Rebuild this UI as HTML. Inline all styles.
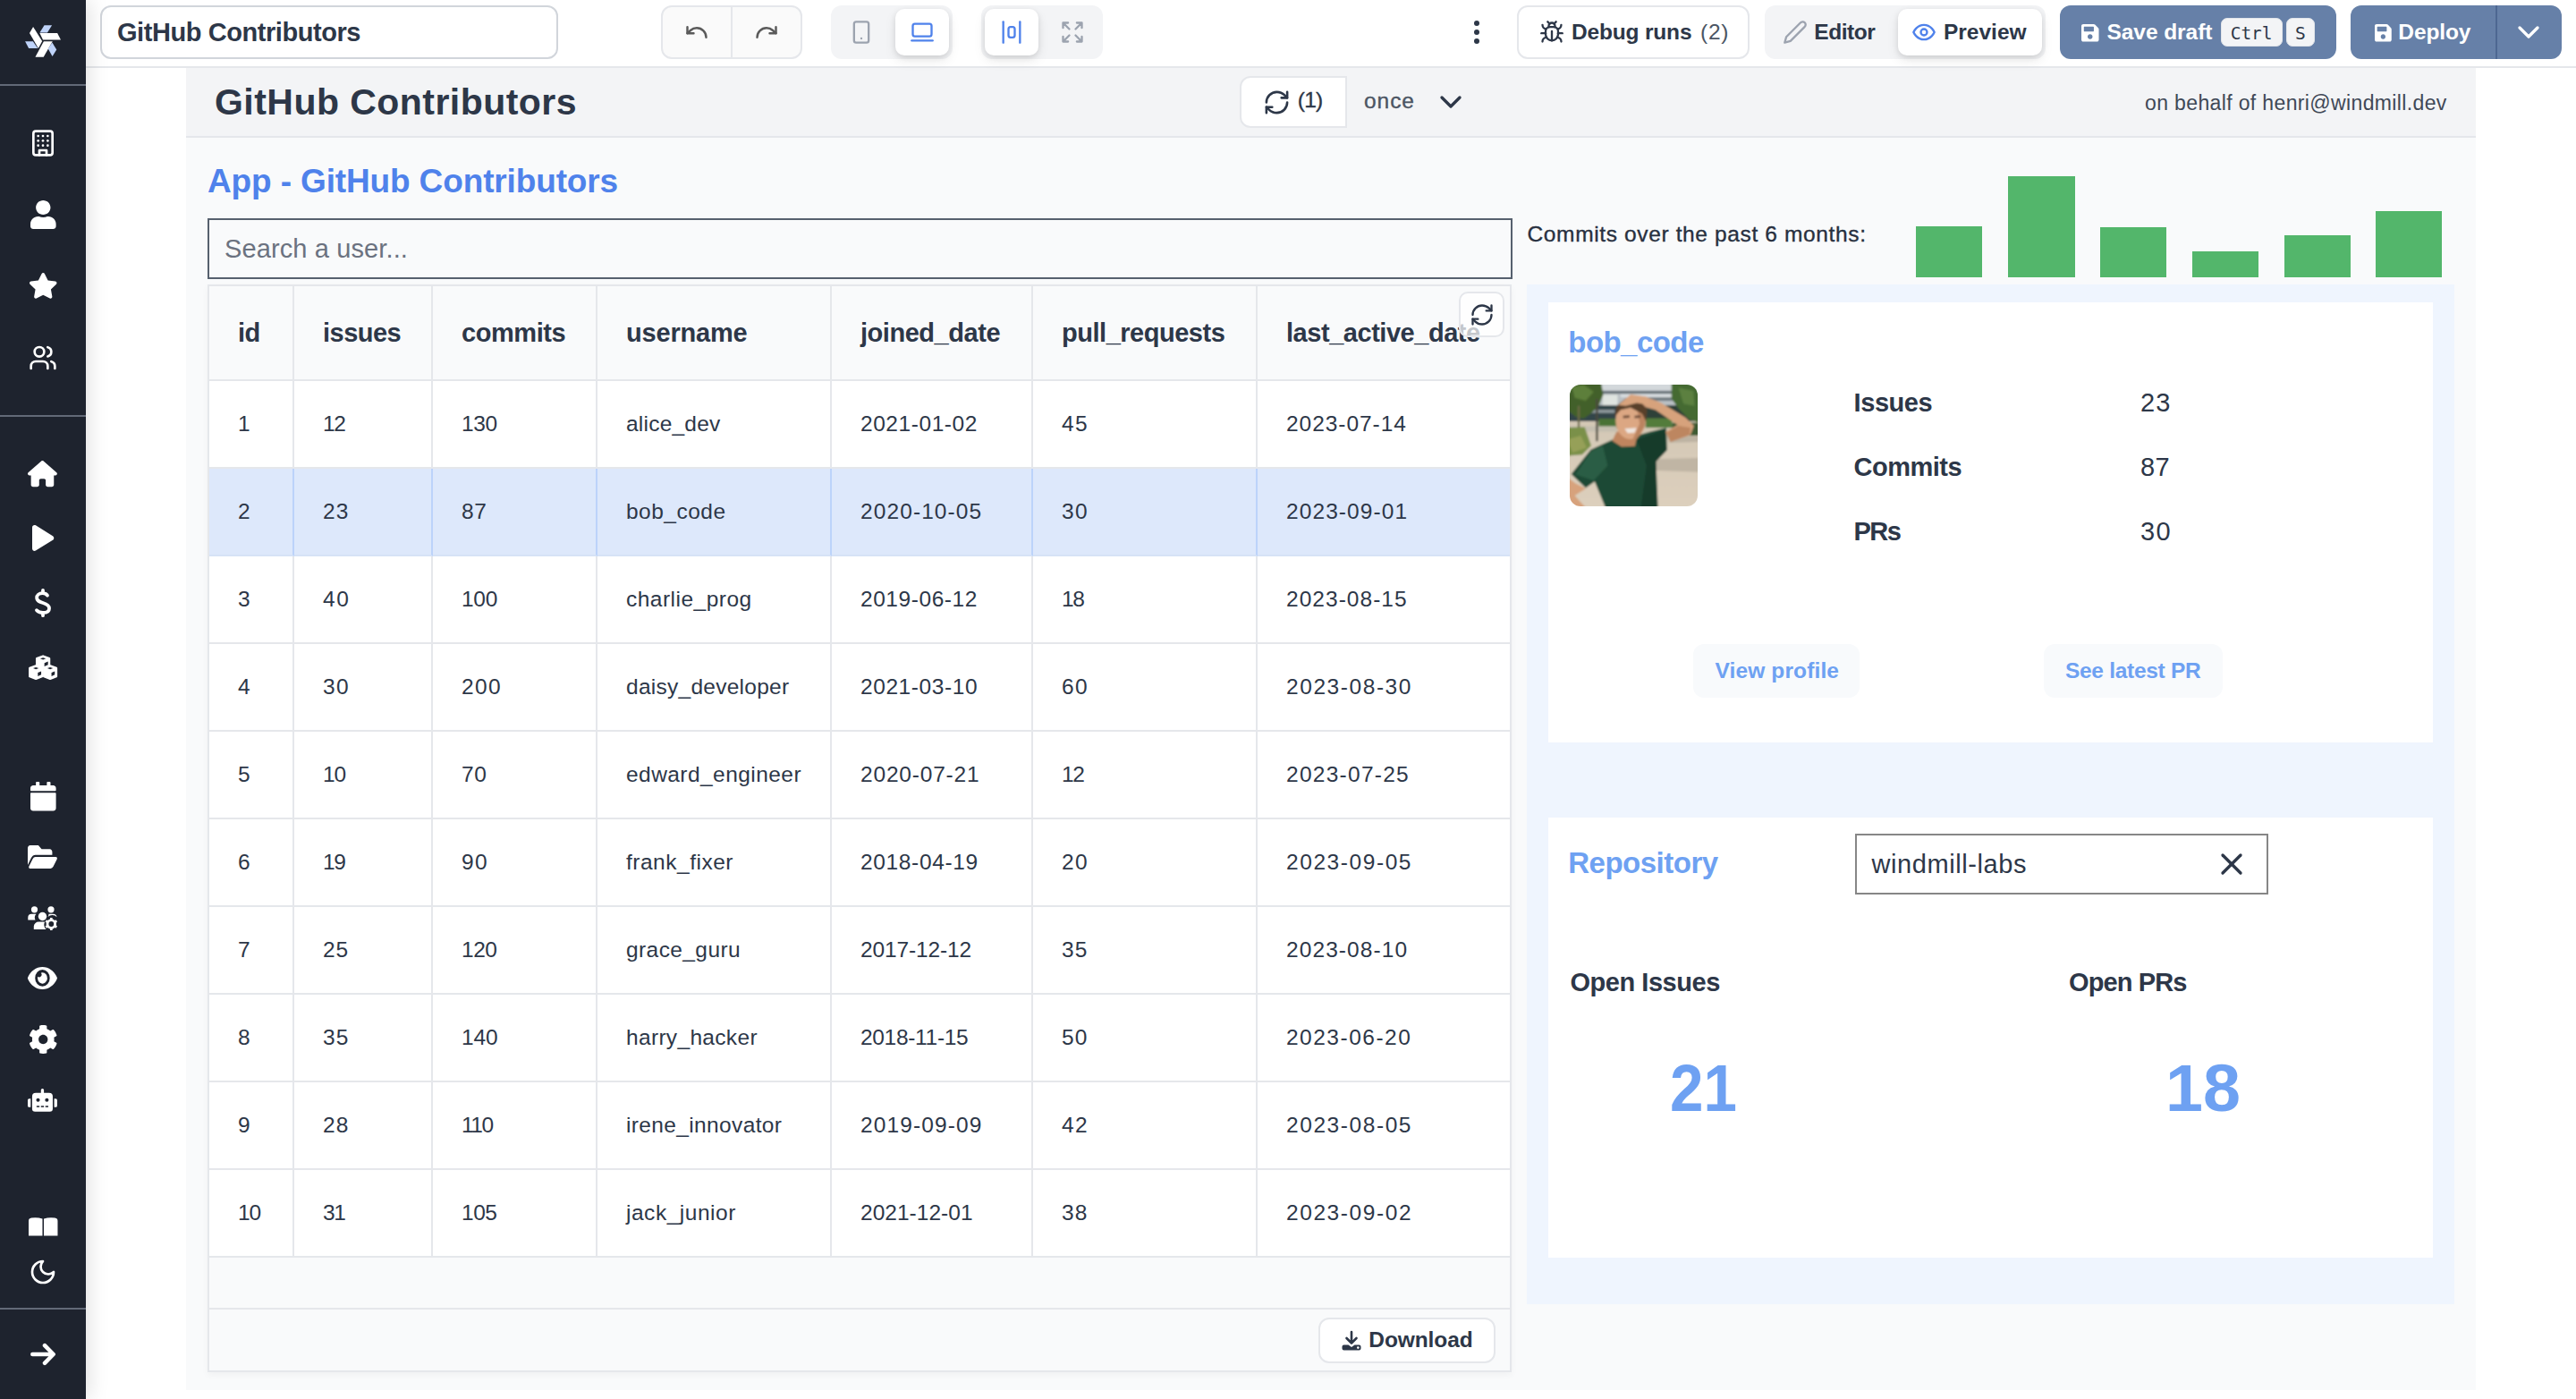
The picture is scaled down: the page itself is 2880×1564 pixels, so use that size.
<!DOCTYPE html><html lang="en"><head><meta charset="utf-8"><title>GitHub Contributors</title><style>
*{box-sizing:border-box;margin:0;padding:0}
html,body{width:2880px;height:1564px;overflow:hidden;background:#fff}
body{position:relative;font-family:"Liberation Sans",sans-serif;color:#2d3748}
.abs,.t,.ic{position:absolute}
.t{white-space:nowrap;line-height:1}
.ic{display:block;overflow:visible}
#sidebar{left:0;top:0;width:96px;height:1564px;background:#1e232e;box-shadow:3px 0 22px rgba(0,0,0,.13);z-index:5}
.sdiv{left:0;width:96px;height:2px;background:#626977}
#topbar{left:96px;top:0;width:2784px;height:76px;background:#fff;border-bottom:2px solid #e5e7eb;z-index:3}
.box{border:2px solid #e5e7eb;border-radius:12px;background:#fff}
.tog{background:#f3f4f6;border-radius:12px}
.sel{background:#fff;border-radius:10px;box-shadow:0 2px 6px rgba(0,0,0,.10),0 6px 14px rgba(0,0,0,.08)}
#canvas{left:208px;top:75px;width:2560px;height:1479px;background:#f9fafb}
#apphdr{left:0;top:0;width:2560px;height:79px;background:#f3f4f6;border-bottom:2px solid #e5e7eb}
table{border-collapse:separate;border-spacing:0;table-layout:fixed;position:absolute;left:0;top:0}
th,td{border-right:2px solid #e5e7eb;border-bottom:2px solid #e5e7eb;text-align:left;padding:0 0 0 32px;white-space:nowrap;overflow:hidden;vertical-align:top}
th:last-child,td:last-child{border-right:none}
th{height:106px;background:#f9fafb;color:#2d3748}
td{height:98px;background:#fff;color:#2d3748}
tr.selrow td{background:#dde8fb;border-right-color:#bcd3fa;border-bottom-color:#d6e2f6}
th span,td span{display:block;line-height:1;position:relative}
kbd{position:absolute;background:#f3f4f6;border:1px solid #e2e5ea;border-radius:7px;color:#2d3748;font-family:"DejaVu Sans Mono","Liberation Mono",monospace;font-size:19.500px;line-height:1;text-align:center}
</style></head><body>
<div id="topbar" class="abs">
<div class="abs box" style="left:16px;top:6px;width:512px;height:60px;border-color:#d1d5db"></div>
<span class="t" style="left:35px;top:22.45px;font-size:29.0px;font-weight:700;letter-spacing:-0.437px;color:#2d3748;">GitHub Contributors</span>
<div class="abs box" style="left:643px;top:6px;width:158px;height:60px;background:#fafafa"></div>
<div class="abs" style="left:721px;top:8px;width:2px;height:56px;background:#e5e7eb"></div>
<svg class="ic" style="left:668.75px;top:22.00px;width:28px;height:28px;" viewBox="0 0 24 24" fill="none" stroke="#5a5a5a" stroke-width="2.1" stroke-linecap="round" stroke-linejoin="round"><path d="M3 7v6h6"/><path d="M21 17a9 9 0 0 0-9-9 9 9 0 0 0-6 2.3L3 13"/></svg>
<svg class="ic" style="left:747.00px;top:22.00px;width:28px;height:28px;" viewBox="0 0 24 24" fill="none" stroke="#5a5a5a" stroke-width="2.1" stroke-linecap="round" stroke-linejoin="round"><path d="M21 7v6h-6"/><path d="M3 17a9 9 0 0 1 9-9 9 9 0 0 1 6 2.3l3 2.7"/></svg>
<div class="abs tog" style="left:833px;top:6px;width:135.5px;height:60px"></div>
<div class="abs sel" style="left:905px;top:10px;width:60px;height:52px"></div>
<svg class="ic" style="left:852.75px;top:22.00px;width:28px;height:28px;" viewBox="0 0 24 24" fill="none" stroke="#9ca3af" stroke-width="2" stroke-linecap="round" stroke-linejoin="round"><rect width="14" height="20" x="5" y="2" rx="2" ry="2"/><path d="M12 18h.01"/></svg>
<svg class="ic" style="left:920.50px;top:22.00px;width:28px;height:28px;" viewBox="0 0 24 24" fill="none" stroke="#4f82eb" stroke-width="2" stroke-linecap="round" stroke-linejoin="round"><rect width="18" height="12" x="3" y="4" rx="2" ry="2"/><line x1="2" x2="22" y1="20" y2="20"/></svg>
<div class="abs tog" style="left:1001px;top:6px;width:135.5px;height:60px"></div>
<div class="abs sel" style="left:1004.5px;top:10px;width:60px;height:52px"></div>
<svg class="ic" style="left:1020.50px;top:22.00px;width:28px;height:28px;" viewBox="0 0 24 24" fill="none" stroke="#4f82eb" stroke-width="2" stroke-linecap="round" stroke-linejoin="round"><rect width="6" height="10" x="9" y="7" rx="2"/><path d="M4 22V2"/><path d="M20 22V2"/></svg>
<svg class="ic" style="left:1088.50px;top:22.00px;width:28px;height:28px;" viewBox="0 0 24 24" fill="none" stroke="#9ca3af" stroke-width="2" stroke-linecap="round" stroke-linejoin="round"><path d="m21 21-6-6m6 6v-4.8m0 4.8h-4.8"/><path d="M3 16.2V21m0 0h4.8M3 21l6-6"/><path d="M21 7.8V3m0 0h-4.8M21 3l-6 6"/><path d="M3 7.8V3m0 0h4.8M3 3l6 6"/></svg>
<div class="abs" style="left:1551.7px;top:22.9px;width:6.6px;height:6.6px;border-radius:50%;background:#2d3748"></div>
<div class="abs" style="left:1551.7px;top:32.7px;width:6.6px;height:6.6px;border-radius:50%;background:#2d3748"></div>
<div class="abs" style="left:1551.7px;top:42.5px;width:6.6px;height:6.6px;border-radius:50%;background:#2d3748"></div>
<div class="abs box" style="left:1599.5px;top:6px;width:260.5px;height:60px"></div>
<svg class="ic" style="left:1625.00px;top:22.00px;width:28px;height:28px;" viewBox="0 0 24 24" fill="none" stroke="#2d3748" stroke-width="2" stroke-linecap="round" stroke-linejoin="round"><path d="m8 2 1.88 1.88"/><path d="M14.12 3.88 16 2"/><path d="M9 7.13v-1a3.003 3.003 0 1 1 6 0v1"/><path d="M12 20c-3.3 0-6-2.7-6-6v-3a4 4 0 0 1 4-4h4a4 4 0 0 1 4 4v3c0 3.3-2.7 6-6 6"/><path d="M12 20v-9"/><path d="M6.53 9C4.6 8.8 3 7.1 3 5"/><path d="M6 13H2"/><path d="M3 21c0-2.1 1.7-3.9 3.8-4"/><path d="M20.97 5c0 2.1-1.6 3.8-3.5 4"/><path d="M22 13h-4"/><path d="M17.2 17c2.1.1 3.8 1.9 3.8 4"/></svg>
<span class="t" style="left:1661px;top:23.96px;font-size:24.5px;font-weight:700;letter-spacing:-0.177px;color:#2d3748;">Debug runs</span>
<span class="t" style="left:1805px;top:23.96px;font-size:24.5px;font-weight:400;letter-spacing:0.734px;color:#4b5563;">(2)</span>
<div class="abs tog" style="left:1876.5px;top:6px;width:314.5px;height:60px"></div>
<div class="abs sel" style="left:2025.75px;top:10px;width:161.25px;height:52px"></div>
<svg class="ic" style="left:1897.00px;top:22.00px;width:28px;height:28px;" viewBox="0 0 24 24" fill="none" stroke="#9ca3af" stroke-width="2" stroke-linecap="round" stroke-linejoin="round"><path d="M17 3a2.85 2.83 0 1 1 4 4L7.5 20.5 2 22l1.5-5.5Z"/></svg>
<span class="t" style="left:1932.3px;top:23.96px;font-size:24.5px;font-weight:700;letter-spacing:-0.434px;color:#2d3748;">Editor</span>
<svg class="ic" style="left:2041.25px;top:22.00px;width:28px;height:28px;" viewBox="0 0 24 24" fill="none" stroke="#4f82eb" stroke-width="2" stroke-linecap="round" stroke-linejoin="round"><path d="M2 12s3-7 10-7 10 7 10 7-3 7-10 7-10-7-10-7Z"/><circle cx="12" cy="12" r="3"/></svg>
<span class="t" style="left:2077px;top:23.96px;font-size:24.5px;font-weight:700;letter-spacing:-0.007px;color:#2d3748;">Preview</span>
<div class="abs" style="left:2207px;top:6px;width:308.5px;height:60px;border-radius:12px;background:#6680a8"></div>
<svg class="ic" style="left:2230.50px;top:27.00px;width:19.50px;height:19.50px" viewBox="0.00 32.00 448.00 448.00" preserveAspectRatio="none"><path fill="#fff" d="M433.941 129.941l-83.882-83.882A48 48 0 0 0 316.118 32H48C21.49 32 0 53.49 0 80v352c0 26.51 21.49 48 48 48h352c26.51 0 48-21.49 48-48V163.882a48 48 0 0 0-14.059-33.941zM224 416c-35.346 0-64-28.654-64-64 0-35.346 28.654-64 64-64s64 28.654 64 64c0 35.346-28.654 64-64 64zm96-304.52V212c0 6.627-5.373 12-12 12H76c-6.627 0-12-5.373-12-12V108c0-6.627 5.373-12 12-12h228.52c3.183 0 6.235 1.264 8.485 3.515l3.48 3.48A11.996 11.996 0 0 1 320 111.48z"/></svg>
<span class="t" style="left:2259.5px;top:23.96px;font-size:24.5px;font-weight:700;letter-spacing:-0.064px;color:#fff;">Save draft</span>
<kbd style="left:2386.75px;top:20px;width:68.75px;height:32px;padding-top:6.600px">Ctrl</kbd>
<kbd style="left:2460px;top:20px;width:31.500px;height:32px;padding-top:6.600px">S</kbd>
<div class="abs" style="left:2531.75px;top:6px;width:235.75px;height:60px;border-radius:12px;background:#6680a8"></div>
<div class="abs" style="left:2693.5px;top:6px;width:2px;height:60px;background:#4d6792"></div>
<svg class="ic" style="left:2558.75px;top:27.00px;width:18.75px;height:19.50px" viewBox="0.00 32.00 448.00 448.00" preserveAspectRatio="none"><path fill="#fff" d="M433.941 129.941l-83.882-83.882A48 48 0 0 0 316.118 32H48C21.49 32 0 53.49 0 80v352c0 26.51 21.49 48 48 48h352c26.51 0 48-21.49 48-48V163.882a48 48 0 0 0-14.059-33.941zM224 416c-35.346 0-64-28.654-64-64 0-35.346 28.654-64 64-64s64 28.654 64 64c0 35.346-28.654 64-64 64zm96-304.52V212c0 6.627-5.373 12-12 12H76c-6.627 0-12-5.373-12-12V108c0-6.627 5.373-12 12-12h228.52c3.183 0 6.235 1.264 8.485 3.515l3.48 3.48A11.996 11.996 0 0 1 320 111.48z"/></svg>
<span class="t" style="left:2585.3px;top:23.96px;font-size:24.5px;font-weight:700;letter-spacing:-0.102px;color:#fff;">Deploy</span>
<svg class="ic" style="left:2711.00px;top:16.25px;width:40px;height:40px;" viewBox="0 0 24 24" fill="none" stroke="#fff" stroke-width="2" stroke-linecap="round" stroke-linejoin="round"><path d="m6 9 6 6 6-6"/></svg>
</div>
<div id="canvas" class="abs">
<div id="apphdr" class="abs">
<span class="t" style="left:32px;top:19.29px;font-size:41.0px;font-weight:700;letter-spacing:0.460px;color:#2d3748;">GitHub Contributors</span>
<div class="abs" style="left:1178.25px;top:9.5px;width:119.25px;height:58.5px;background:#fff;border:2px solid #e5e7eb;border-radius:12px 0 0 12px"></div>
<svg class="ic" style="left:1203.50px;top:23.50px;width:31px;height:31px;" viewBox="0 0 24 24" fill="none" stroke="#2d3748" stroke-width="2" stroke-linecap="round" stroke-linejoin="round"><path d="M3 12a9 9 0 0 1 9-9 9.75 9.75 0 0 1 6.74 2.74L21 8"/><path d="M21 3v5h-5"/><path d="M21 12a9 9 0 0 1-9 9 9.75 9.75 0 0 1-6.74-2.74L3 16"/><path d="M8 16H3v5"/></svg>
<span class="t" style="left:1242.75px;top:25.46px;font-size:24.5px;font-weight:400;letter-spacing:-0.762px;-webkit-text-stroke:0.35px currentColor;color:#2d3748;">(1)</span>
<span class="t" style="left:1317px;top:25.86px;font-size:24.5px;font-weight:400;letter-spacing:0.939px;-webkit-text-stroke:0.35px currentColor;color:#4b5563;">once</span>
<svg class="ic" style="left:1393.60px;top:19.40px;width:40px;height:40px;" viewBox="0 0 24 24" fill="none" stroke="#2d3748" stroke-width="2" stroke-linecap="round" stroke-linejoin="round"><path d="m6 9 6 6 6-6"/></svg>
<span class="t" style="left:2190px;top:28.53px;font-size:23.0px;font-weight:400;letter-spacing:0.367px;color:#3f4856;">on behalf of henri@windmill.dev</span>
</div>
<span class="t" style="left:24px;top:109.18px;font-size:37.0px;font-weight:700;letter-spacing:-0.136px;color:#4f82eb;">App - GitHub Contributors</span>
<div class="abs" style="left:24px;top:169px;width:1459px;height:68px;border:2px solid #56606e"></div>
<span class="t" style="left:43px;top:189.45px;font-size:29.0px;font-weight:400;letter-spacing:0.120px;color:#6b7280;">Search a user...</span>
<div class="abs" style="left:24px;top:243px;width:1458px;height:1216px;border:2px solid #e5e7eb;background:#f9fafb;box-shadow:0 3px 8px rgba(0,0,0,.04)">
<table><colgroup><col style="width:95px"><col style="width:155px"><col style="width:184px"><col style="width:262px"><col style="width:225px"><col style="width:251px"><col style="width:282px"></colgroup>
<thead><tr><th><span style="top:38.45px;font-size:29.0px;font-weight:700;letter-spacing:-0.485px;">id</span></th><th><span style="top:38.45px;font-size:29.0px;font-weight:700;letter-spacing:-0.519px;">issues</span></th><th><span style="top:38.45px;font-size:29.0px;font-weight:700;letter-spacing:-0.445px;">commits</span></th><th><span style="top:38.45px;font-size:29.0px;font-weight:700;letter-spacing:-0.196px;">username</span></th><th><span style="top:38.45px;font-size:29.0px;font-weight:700;letter-spacing:-0.462px;">joined_date</span></th><th><span style="top:38.45px;font-size:29.0px;font-weight:700;letter-spacing:-0.478px;">pull_requests</span></th><th><span style="top:38.45px;font-size:29.0px;font-weight:700;letter-spacing:-0.459px;">last_active_date</span></th></tr></thead><tbody>
<tr><td><span style="top:36.26px;font-size:24.5px;font-weight:400;letter-spacing:-3.864px;">1</span></td><td><span style="top:36.26px;font-size:24.5px;font-weight:400;letter-spacing:-1.427px;">12</span></td><td><span style="top:36.26px;font-size:24.5px;font-weight:400;letter-spacing:-0.384px;">130</span></td><td><span style="top:36.26px;font-size:24.5px;font-weight:400;letter-spacing:0.216px;">alice_dev</span></td><td><span style="top:36.26px;font-size:24.5px;font-weight:400;letter-spacing:0.561px;">2021-01-02</span></td><td><span style="top:36.26px;font-size:24.5px;font-weight:400;letter-spacing:1.421px;">45</span></td><td><span style="top:36.26px;font-size:24.5px;font-weight:400;letter-spacing:0.951px;">2023-07-14</span></td></tr>
<tr class="selrow"><td><span style="top:36.26px;font-size:24.5px;font-weight:400;letter-spacing:1.011px;">2</span></td><td><span style="top:36.26px;font-size:24.5px;font-weight:400;letter-spacing:1.105px;">23</span></td><td><span style="top:36.26px;font-size:24.5px;font-weight:400;letter-spacing:0.589px;">87</span></td><td><span style="top:36.26px;font-size:24.5px;font-weight:400;letter-spacing:0.486px;">bob_code</span></td><td><span style="top:36.26px;font-size:24.5px;font-weight:400;letter-spacing:1.094px;">2020-10-05</span></td><td><span style="top:36.26px;font-size:24.5px;font-weight:400;letter-spacing:1.357px;">30</span></td><td><span style="top:36.26px;font-size:24.5px;font-weight:400;letter-spacing:1.092px;">2023-09-01</span></td></tr>
<tr><td><span style="top:36.26px;font-size:24.5px;font-weight:400;letter-spacing:1.198px;">3</span></td><td><span style="top:36.26px;font-size:24.5px;font-weight:400;letter-spacing:1.697px;">40</span></td><td><span style="top:36.26px;font-size:24.5px;font-weight:400;letter-spacing:-0.278px;">100</span></td><td><span style="top:36.26px;font-size:24.5px;font-weight:400;letter-spacing:0.481px;">charlie_prog</span></td><td><span style="top:36.26px;font-size:24.5px;font-weight:400;letter-spacing:0.560px;">2019-06-12</span></td><td><span style="top:36.26px;font-size:24.5px;font-weight:400;letter-spacing:-1.321px;">18</span></td><td><span style="top:36.26px;font-size:24.5px;font-weight:400;letter-spacing:1.033px;">2023-08-15</span></td></tr>
<tr><td><span style="top:36.26px;font-size:24.5px;font-weight:400;letter-spacing:1.878px;">4</span></td><td><span style="top:36.26px;font-size:24.5px;font-weight:400;letter-spacing:1.357px;">30</span></td><td><span style="top:36.26px;font-size:24.5px;font-weight:400;letter-spacing:1.347px;">200</span></td><td><span style="top:36.26px;font-size:24.5px;font-weight:400;letter-spacing:0.261px;">daisy_developer</span></td><td><span style="top:36.26px;font-size:24.5px;font-weight:400;letter-spacing:0.580px;">2021-03-10</span></td><td><span style="top:36.26px;font-size:24.5px;font-weight:400;letter-spacing:1.386px;">60</span></td><td><span style="top:36.26px;font-size:24.5px;font-weight:400;letter-spacing:1.568px;">2023-08-30</span></td></tr>
<tr><td><span style="top:36.26px;font-size:24.5px;font-weight:400;letter-spacing:0.964px;">5</span></td><td><span style="top:36.26px;font-size:24.5px;font-weight:400;letter-spacing:-1.175px;">10</span></td><td><span style="top:36.26px;font-size:24.5px;font-weight:400;letter-spacing:0.548px;">70</span></td><td><span style="top:36.26px;font-size:24.5px;font-weight:400;letter-spacing:0.443px;">edward_engineer</span></td><td><span style="top:36.26px;font-size:24.5px;font-weight:400;letter-spacing:0.815px;">2020-07-21</span></td><td><span style="top:36.26px;font-size:24.5px;font-weight:400;letter-spacing:-1.427px;">12</span></td><td><span style="top:36.26px;font-size:24.5px;font-weight:400;letter-spacing:1.267px;">2023-07-25</span></td></tr>
<tr><td><span style="top:36.26px;font-size:24.5px;font-weight:400;letter-spacing:1.257px;">6</span></td><td><span style="top:36.26px;font-size:24.5px;font-weight:400;letter-spacing:-1.303px;">19</span></td><td><span style="top:36.26px;font-size:24.5px;font-weight:400;letter-spacing:1.386px;">90</span></td><td><span style="top:36.26px;font-size:24.5px;font-weight:400;letter-spacing:0.509px;">frank_fixer</span></td><td><span style="top:36.26px;font-size:24.5px;font-weight:400;letter-spacing:0.643px;">2018-04-19</span></td><td><span style="top:36.26px;font-size:24.5px;font-weight:400;letter-spacing:1.263px;">20</span></td><td><span style="top:36.26px;font-size:24.5px;font-weight:400;letter-spacing:1.575px;">2023-09-05</span></td></tr>
<tr><td><span style="top:36.26px;font-size:24.5px;font-weight:400;letter-spacing:-0.044px;">7</span></td><td><span style="top:36.26px;font-size:24.5px;font-weight:400;letter-spacing:0.988px;">25</span></td><td><span style="top:36.26px;font-size:24.5px;font-weight:400;letter-spacing:-0.446px;">120</span></td><td><span style="top:36.26px;font-size:24.5px;font-weight:400;letter-spacing:0.407px;">grace_guru</span></td><td><span style="top:36.26px;font-size:24.5px;font-weight:400;letter-spacing:-0.133px;">2017-12-12</span></td><td><span style="top:36.26px;font-size:24.5px;font-weight:400;letter-spacing:1.081px;">35</span></td><td><span style="top:36.26px;font-size:24.5px;font-weight:400;letter-spacing:1.088px;">2023-08-10</span></td></tr>
<tr><td><span style="top:36.26px;font-size:24.5px;font-weight:400;letter-spacing:1.222px;">8</span></td><td><span style="top:36.26px;font-size:24.5px;font-weight:400;letter-spacing:1.081px;">35</span></td><td><span style="top:36.26px;font-size:24.5px;font-weight:400;letter-spacing:-0.157px;">140</span></td><td><span style="top:36.26px;font-size:24.5px;font-weight:400;letter-spacing:0.324px;">harry_hacker</span></td><td><span style="top:36.26px;font-size:24.5px;font-weight:400;letter-spacing:-0.317px;">2018-11-15</span></td><td><span style="top:36.26px;font-size:24.5px;font-weight:400;letter-spacing:1.240px;">50</span></td><td><span style="top:36.26px;font-size:24.5px;font-weight:400;letter-spacing:1.499px;">2023-06-20</span></td></tr>
<tr><td><span style="top:36.26px;font-size:24.5px;font-weight:400;letter-spacing:1.257px;">9</span></td><td><span style="top:36.26px;font-size:24.5px;font-weight:400;letter-spacing:1.116px;">28</span></td><td><span style="top:36.26px;font-size:24.5px;font-weight:400;letter-spacing:-1.465px;">110</span></td><td><span style="top:36.26px;font-size:24.5px;font-weight:400;letter-spacing:0.364px;">irene_innovator</span></td><td><span style="top:36.26px;font-size:24.5px;font-weight:400;letter-spacing:1.122px;">2019-09-09</span></td><td><span style="top:36.26px;font-size:24.5px;font-weight:400;letter-spacing:1.445px;">42</span></td><td><span style="top:36.26px;font-size:24.5px;font-weight:400;letter-spacing:1.571px;">2023-08-05</span></td></tr>
<tr><td><span style="top:36.26px;font-size:24.5px;font-weight:400;letter-spacing:-1.175px;">10</span></td><td><span style="top:36.26px;font-size:24.5px;font-weight:400;letter-spacing:-1.333px;">31</span></td><td><span style="top:36.26px;font-size:24.5px;font-weight:400;letter-spacing:-0.462px;">105</span></td><td><span style="top:36.26px;font-size:24.5px;font-weight:400;letter-spacing:0.521px;">jack_junior</span></td><td><span style="top:36.26px;font-size:24.5px;font-weight:400;letter-spacing:0.023px;">2021-12-01</span></td><td><span style="top:36.26px;font-size:24.5px;font-weight:400;letter-spacing:1.210px;">38</span></td><td><span style="top:36.26px;font-size:24.5px;font-weight:400;letter-spacing:1.579px;">2023-09-02</span></td></tr>
</tbody></table>
<div class="abs" style="left:0;top:1142px;width:1454px;height:2px;background:#e5e7eb"></div>
<div class="abs box" style="left:1240.25px;top:1153px;width:197.75px;height:50.5px"></div>
<svg class="ic" style="left:1266px;top:1167.75px;width:22px;height:21.5px" viewBox="0 0 22 21.5"><path d="M11 1v12M5.5 8l5.5 5.5L16.500 8" fill="none" stroke="#2d3748" stroke-width="2.6" stroke-linecap="round" stroke-linejoin="round"/><path d="M2.5 15.500h5l3.500 2.5 3.500-2.500h5a2 2 0 0 1 2 2v2a2 2 0 0 1-2 2h-17a2 2 0 0 1-2-2v-2a2 2 0 0 1 2-2z" fill="#2d3748"/><circle cx="18.300" cy="18.600" r="1.300" fill="#fff"/></svg>
<span class="t" style="left:1296.3px;top:1165.51px;font-size:24.5px;font-weight:700;letter-spacing:-0.094px;color:#2d3748;">Download</span>
<div class="abs" style="left:1397.25px;top:6.25px;width:50.5px;height:50.75px;border:2px solid #e5e7eb;border-radius:10px;background:rgba(255,255,255,.72)"></div>
<svg class="ic" style="left:1409.00px;top:18.00px;width:28px;height:28px;" viewBox="0 0 24 24" fill="none" stroke="#2d3748" stroke-width="2" stroke-linecap="round" stroke-linejoin="round"><path d="M3 12a9 9 0 0 1 9-9 9.75 9.75 0 0 1 6.74 2.74L21 8"/><path d="M21 3v5h-5"/><path d="M21 12a9 9 0 0 1-9 9 9.75 9.75 0 0 1-6.74-2.74L3 16"/><path d="M8 16H3v5"/></svg>
</div>
<span class="t" style="left:1499.5px;top:174.56px;font-size:24.5px;font-weight:400;letter-spacing:0.634px;-webkit-text-stroke:0.35px currentColor;color:#283040;">Commits over the past 6 months:</span>
<div class="abs" style="left:1933.75px;top:178.25px;width:74.25px;height:56.25px;background:#53b66b"></div>
<div class="abs" style="left:2037.25px;top:121.75px;width:74.25px;height:112.75px;background:#53b66b"></div>
<div class="abs" style="left:2139.75px;top:178.75px;width:74.25px;height:55.75px;background:#53b66b"></div>
<div class="abs" style="left:2242.50px;top:206.00px;width:74.25px;height:28.50px;background:#53b66b"></div>
<div class="abs" style="left:2345.50px;top:188.00px;width:74.25px;height:46.50px;background:#53b66b"></div>
<div class="abs" style="left:2448.00px;top:160.50px;width:74.25px;height:74.00px;background:#53b66b"></div>
<div class="abs" style="left:1499px;top:243px;width:1036.5px;height:1139.5px;background:#eff5fe"></div>
<div class="abs" style="left:1522.5px;top:262.5px;width:989.5px;height:492.5px;background:#fff"></div>
<div class="abs" style="left:1522.5px;top:839px;width:989.5px;height:492px;background:#fff"></div>
<span class="t" style="left:1545.3px;top:290.57px;font-size:33.0px;font-weight:700;letter-spacing:-0.549px;color:#6ea1f2;">bob_code</span>
<svg class="ic" style="left:1547px;top:355px;width:143px;height:136px;border-radius:12px;overflow:hidden" viewBox="90 88 1282 1220" preserveAspectRatio="none"><defs><filter id="pb" x="-5%" y="-5%" width="110%" height="110%"><feGaussianBlur stdDeviation="11"/></filter><linearGradient id="gnd" x1="0" y1="0" x2="0" y2="1"><stop offset="0" stop-color="#cfc4b2"/><stop offset="1" stop-color="#ddd0bd"/></linearGradient></defs><g filter="url(#pb)"><rect x="40" y="40" width="1380" height="1320" fill="url(#gnd)"/><rect x="40" y="40" width="1380" height="270" fill="#b9c0c4"/><rect x="400" y="60" width="760" height="90" fill="#d3d8db"/><rect x="400" y="150" width="760" height="28" fill="#5f6a72"/><rect x="420" y="190" width="150" height="110" fill="#dfe4e0"/><rect x="600" y="185" width="560" height="30" fill="#d9dde0"/><rect x="870" y="215" width="290" height="35" fill="#707a80"/><rect x="40" y="295" width="1380" height="160" fill="#33444a"/><rect x="100" y="340" width="440" height="32" fill="#8e989c"/><rect x="860" y="300" width="560" height="150" fill="#2f3f38"/><rect x="380" y="430" width="190" height="98" fill="#4a7234"/><rect x="850" y="425" width="265" height="95" fill="#527c3a"/><rect x="1115" y="470" width="305" height="130" fill="#3d5a30"/><rect x="40" y="505" width="520" height="55" fill="#c5bfb0"/><polygon points="40,40 400,40 425,190 380,300 300,380 230,430 150,410 40,320" fill="#42602a" /><polygon points="110,110 230,90 330,160 250,250 140,220" fill="#5d7f3a" /><polygon points="1110,40 1420,40 1420,480 1290,440 1190,340 1110,230" fill="#456a30" /><polygon points="1180,120 1330,150 1340,300 1230,280" fill="#5b8040" /><rect x="352" y="230" width="21" height="425" fill="#4b4a3f"/><rect x="170" y="300" width="20" height="320" fill="#6b6a45"/><polygon points="40,520 240,515 305,700 215,790 40,805" fill="#7a9048" /><polygon points="60,640 200,600 260,720 120,770" fill="#96a058" /><polygon points="960,835 1420,820 1420,965 960,950" fill="#c0b5a4" /><polygon points="1060,600 1420,610 1420,660 1090,670" fill="#bdb3a3" /><polygon points="520,640 430,680 300,740 105,985 250,1125 340,1060 455,1340 975,1340 955,860 1065,745 1058,520 900,560 760,600 700,700" fill="#1f4a36" /><polygon points="300,760 420,700 470,900 330,1050 150,990" fill="#2b5d45" /><polygon points="760,640 1050,540 1060,740 955,860 965,1340 800,1340 860,900" fill="#173b2a" /><polygon points="590,290 700,195 850,208 1000,268 1250,418 1335,500 1300,592 1100,662 1050,562 1170,492 950,342 800,300 620,312" fill="#d7a27c" /><polygon points="1060,570 1180,500 1300,520 1290,592 1100,662" fill="#bd8661" /><polygon points="560,560 770,560 745,705 610,712 515,650" fill="#c0855f" /><ellipse cx="700" cy="448" rx="150" ry="188" fill="#dca783"/><polygon points="760,300 850,380 845,500 760,640 720,640 790,480" fill="#bb8460" /><polygon points="640,530 760,520 740,570 670,575" fill="#f0e6e0" /><polygon points="625,400 690,395 690,420 625,425" fill="#6b4a38" /><polygon points="740,400 800,395 800,420 740,425" fill="#6b4a38" /><polygon points="538,410 560,300 650,228 790,250 865,330 855,455 815,380 700,318 600,342" fill="#59402a" /><polygon points="578,292 700,186 862,210 905,292 760,272 650,302" fill="#d9a47e" /><polygon points="40,1000 150,1080 250,1130 140,1200 265,1340 40,1340" fill="#d7a27c" /></g></svg>
<span class="t" style="left:1864.6px;top:360.95px;font-size:29.0px;font-weight:700;letter-spacing:-0.448px;color:#2d3748;">Issues</span>
<span class="t" style="left:2185px;top:360.95px;font-size:29.0px;font-weight:400;letter-spacing:1.057px;color:#2d3748;">23</span>
<span class="t" style="left:1864.6px;top:432.70px;font-size:29.0px;font-weight:700;letter-spacing:-0.515px;color:#2d3748;">Commits</span>
<span class="t" style="left:2185px;top:432.70px;font-size:29.0px;font-weight:400;letter-spacing:0.456px;color:#2d3748;">87</span>
<span class="t" style="left:1864.6px;top:505.20px;font-size:29.0px;font-weight:700;letter-spacing:-1.569px;color:#2d3748;">PRs</span>
<span class="t" style="left:2185px;top:505.20px;font-size:29.0px;font-weight:400;letter-spacing:1.351px;color:#2d3748;">30</span>
<div class="abs" style="left:1685px;top:645px;width:185.75px;height:60px;border-radius:12px;background:#f8fafc"></div>
<span class="t" style="left:1709.5px;top:662.76px;font-size:24.5px;font-weight:700;letter-spacing:0.126px;color:#6ea1f2;">View profile</span>
<div class="abs" style="left:2077.25px;top:645px;width:199.5px;height:60px;border-radius:12px;background:#f8fafc"></div>
<span class="t" style="left:2101px;top:662.76px;font-size:24.5px;font-weight:700;letter-spacing:-0.298px;color:#6ea1f2;">See latest PR</span>
<span class="t" style="left:1545.3px;top:872.57px;font-size:33.0px;font-weight:700;letter-spacing:-0.507px;color:#6ea1f2;">Repository</span>
<div class="abs" style="left:1866px;top:857px;width:462px;height:68px;border:2px solid #868686;background:#fff"></div>
<span class="t" style="left:1884.5px;top:876.95px;font-size:29.0px;font-weight:400;letter-spacing:0.578px;color:#2d3748;">windmill-labs</span>
<svg class="ic" style="left:2266.50px;top:871.00px;width:40px;height:40px;" viewBox="0 0 24 24" fill="none" stroke="#2d3748" stroke-width="2" stroke-linecap="round" stroke-linejoin="round"><path d="M18 6 6 18"/><path d="m6 6 12 12"/></svg>
<span class="t" style="left:1547.5px;top:1009.45px;font-size:29.0px;font-weight:700;letter-spacing:-0.466px;color:#2d3748;">Open Issues</span>
<span class="t" style="left:2105px;top:1009.45px;font-size:29.0px;font-weight:700;letter-spacing:-0.893px;color:#2d3748;">Open PRs</span>
<span class="t" style="left:1658.5px;top:1105.36px;font-size:74.0px;font-weight:700;letter-spacing:-2.958px;color:#6ea1f2;letter-spacing:0;transform:scaleX(.91);transform-origin:0 0;">21</span>
<span class="t" style="left:2213px;top:1105.36px;font-size:74.0px;font-weight:700;letter-spacing:-2.202px;color:#6ea1f2;letter-spacing:0;transform:scaleX(1.02);transform-origin:0 0;">18</span>
</div>
<div id="sidebar" class="abs">
<div class="abs sdiv" style="top:94px"></div>
<div class="abs sdiv" style="top:464px"></div>
<div class="abs sdiv" style="top:1462px"></div>
<svg class="ic" style="left:18px;top:16px;width:60px;height:60px" viewBox="0 0 1399 1399"><g fill="#fff"><polygon points="615,490 1075,490 1165,665 700,665"/><polygon points="445,325 680,700 580,885 350,490"/><polygon points="720,705 950,705 715,1115 500,1115"/></g><g fill="#bfd3f9"><polygon points="735,285 935,285 815,480 615,480"/><polygon points="235,705 440,705 565,885 330,885"/><polygon points="940,735 1055,920 945,1095 835,900"/></g></svg>
<svg class="ic" style="left:32.00px;top:143.50px;width:32px;height:32px;" viewBox="0 0 24 24" fill="none" stroke="#fff" stroke-width="2" stroke-linecap="round" stroke-linejoin="round"><rect width="16" height="20" x="4" y="2" rx="2" ry="2"/><path d="M9 22v-4h6v4"/><path d="M8 6h.01"/><path d="M16 6h.01"/><path d="M12 6h.01"/><path d="M12 10h.01"/><path d="M12 14h.01"/><path d="M16 10h.01"/><path d="M16 14h.01"/><path d="M8 10h.01"/><path d="M8 14h.01"/></svg>
<svg class="ic" style="left:33.70px;top:223.70px;width:28.60px;height:32.00px" viewBox="0.00 0.00 448.00 512.00" preserveAspectRatio="none"><path fill="#fff" d="M224 256c70.7 0 128-57.3 128-128S294.7 0 224 0 96 57.3 96 128s57.3 128 128 128zm89.6 32h-16.7c-22.2 10.2-46.9 16-72.9 16s-50.6-5.8-72.9-16h-16.7C60.2 288 0 348.2 0 422.4V464c0 26.5 21.5 48 48 48h352c26.5 0 48-21.5 48-48v-41.6c0-74.2-60.2-134.4-134.4-134.4z"/></svg>
<svg class="ic" style="left:32.90px;top:305.00px;width:30.50px;height:28.70px" viewBox="20.50 -0.01 535.00 512.06" preserveAspectRatio="none"><path fill="#fff" d="M259.3 17.8L194 150.2 47.9 171.5c-26.2 3.8-36.7 36.1-17.7 54.6l105.7 103-25 145.5c-4.5 26.3 23.2 46 46.4 33.7L288 439.6l130.7 68.7c23.2 12.2 50.9-7.4 46.4-33.7l-25-145.5 105.7-103c19-18.5 8.5-50.8-17.7-54.6L382 150.2 316.7 17.8c-11.7-23.6-45.6-23.9-57.4 0z"/></svg>
<svg class="ic" style="left:32.00px;top:384.00px;width:32px;height:32px;" viewBox="0 0 24 24" fill="none" stroke="#fff" stroke-width="2" stroke-linecap="round" stroke-linejoin="round"><path d="M16 21v-2a4 4 0 0 0-4-4H6a4 4 0 0 0-4 4v2"/><circle cx="9" cy="7" r="4"/><path d="M22 21v-2a4 4 0 0 0-3-3.87"/><path d="M16 3.13a4 4 0 0 1 0 7.75"/></svg>
<svg class="ic" style="left:31.40px;top:515.00px;width:32.90px;height:29.30px" viewBox="0.00 0.00 575.95 512.00" preserveAspectRatio="none"><path fill="#fff" d="M575.8 255.5c0 18-15 32.1-32 32.1h-32l.7 160.2c0 2.7-.2 5.4-.5 8.1V472c0 22.1-17.9 40-40 40H456c-1.100 0-2.200 0-3.300-.100c-1.400 .100-2.800 .100-4.200 .100H416 392c-22.100 0-40-17.900-40-40V448 384c0-17.700-14.300-32-32-32H256c-17.700 0-32 14.300-32 32v64 24c0 22.100-17.900 40-40 40H160 128.100c-1.500 0-3-.100-4.500-.200c-1.200 .100-2.400 .200-3.600 .200H104c-22.100 0-40-17.900-40-40V360c0-.900 0-1.900 .100-2.800V287.600H32c-18 0-32-14-32-32.100c0-9 3-17 10-24L266.400 8c7-7 15-8 22-8s15 2 21 7L564.800 231.500c8 7 12 15 11 24z"/></svg>
<svg class="ic" style="left:35.70px;top:587.00px;width:24.30px;height:29.00px" viewBox="0.00 0.03 447.99 512.02" preserveAspectRatio="none"><path fill="#fff" d="M424.4 214.7L72.4 6.6C43.8-10.3 0 6.1 0 47.9V464c0 37.5 40.7 60.1 72.4 41.3l352-208c31.4-18.5 31.5-64.1 0-82.6z"/></svg>
<svg class="ic" style="left:24px;top:650px;width:48px;height:48px" viewBox="0 0 560 560" fill="none" stroke="#fff" stroke-width="44" stroke-linecap="round" stroke-linejoin="round"><path d="M338 182C322 160 300 154 276 154C228 154 200 180 200 214C200 256 240 268 280 280C328 294 362 310 362 352C362 390 330 408 280 408C246 408 216 396 198 376M280 114V152M280 410V446"/></svg>
<svg class="ic" style="left:31.900px;top:731.800px;width:32.400px;height:28.300px" viewBox="92 955 378 330"><g fill="#fff" stroke="#fff" stroke-width="26" stroke-linejoin="round"><polygon points="280,972 362,1001 362,1088 280,1120 198,1088 198,1001"/><polygon points="187,1098 268,1128 268,1237 187,1270 106,1237 106,1128"/><polygon points="373,1098 454,1128 454,1237 373,1270 292,1237 292,1128"/></g><g fill="#1e232e"><polygon points="243,1005 280,992 317,1005 280,1019"/><polygon points="298,1062 345,1043 345,1086 298,1106"/><polygon points="150,1130 187,1117 224,1130 187,1144"/><polygon points="336,1130 373,1117 410,1130 373,1144"/><polygon points="212,1188 256,1170 256,1216 212,1235"/><polygon points="390,1188 433,1170 433,1216 390,1235"/></g></svg>
<svg class="ic" style="left:33.70px;top:873.70px;width:28.60px;height:32.60px" viewBox="0.00 0.00 448.00 512.00" preserveAspectRatio="none"><path fill="#fff" d="M12 192h424c6.6 0 12 5.4 12 12v260c0 26.5-21.5 48-48 48H48c-26.5 0-48-21.5-48-48V204c0-6.6 5.4-12 12-12zm436-44v-36c0-26.5-21.5-48-48-48h-48V12c0-6.6-5.4-12-12-12h-40c-6.6 0-12 5.4-12 12v52H160V12c0-6.6-5.4-12-12-12h-40c-6.6 0-12 5.4-12 12v52H48C21.5 64 0 85.5 0 112v36c0 6.6 5.4 12 12 12h424c6.6 0 12-5.4 12-12z"/></svg>
<svg class="ic" style="left:31.40px;top:945.00px;width:32.90px;height:26.00px" viewBox="0.00 64.00 576.00 384.00" preserveAspectRatio="none"><path fill="#fff" d="M572.694 292.093L500.27 416.248A63.997 63.997 0 0 1 444.989 448H45.025c-18.523 0-30.064-20.093-20.731-36.093l72.424-124.155A64 64 0 0 1 152 256h399.964c18.523 0 30.064 20.093 20.73 36.093zM152 224h328v-48c0-26.51-21.49-48-48-48H272l-64-64H48C21.49 64 0 85.49 0 112v278.046l69.077-118.418C86.214 242.25 117.989 224 152 224z"/></svg>
<svg class="ic" style="left:31.400px;top:1012.900px;width:33px;height:26.500px" viewBox="0 0 33 26.500"><g fill="#fff"><circle cx="7.500" cy="3.800" r="3.600"/><circle cx="26" cy="3.800" r="3.600"/><path d="M0.300 15.500 V12.800 A4 4 0 0 1 4.300 8.800 H9.500 A6 6 0 0 0 8.500 15.500 Z"/><circle cx="16.500" cy="11.500" r="4.700"/><path d="M6.800 26 V22.500 A5.500 5.500 0 0 1 12.300 17.500 H19 A8 8 0 0 0 20.500 26 Z"/><path d="M23.500 8.800 H28.500 A4 4 0 0 1 32.500 12.300 A7 7 0 0 0 22.600 12 A6 6 0 0 0 23.500 8.800 Z"/></g><g transform="translate(26.300 20)"><circle r="4.300" fill="none" stroke="#fff" stroke-width="2.800"/><rect x="-1.300" y="-7" width="2.600" height="3" fill="#fff" transform="rotate(0)"/><rect x="-1.300" y="-7" width="2.600" height="3" fill="#fff" transform="rotate(60)"/><rect x="-1.300" y="-7" width="2.600" height="3" fill="#fff" transform="rotate(120)"/><rect x="-1.300" y="-7" width="2.600" height="3" fill="#fff" transform="rotate(180)"/><rect x="-1.300" y="-7" width="2.600" height="3" fill="#fff" transform="rotate(240)"/><rect x="-1.300" y="-7" width="2.600" height="3" fill="#fff" transform="rotate(300)"/></g></svg>
<svg class="ic" style="left:31.40px;top:1081.40px;width:32.90px;height:24.90px" viewBox="0.00 64.00 576.00 384.00" preserveAspectRatio="none"><path fill="#fff" d="M572.52 241.4C518.29 135.59 410.93 64 288 64S57.68 135.64 3.48 241.41a32.35 32.35 0 0 0 0 29.19C57.71 376.41 165.07 448 288 448s230.32-71.64 284.52-177.41a32.35 32.35 0 0 0 0-29.19zM288 400a144 144 0 1 1 144-144 143.93 143.93 0 0 1-144 144zm0-240a95.31 95.31 0 0 0-25.31 3.79 47.85 47.85 0 0 1-66.9 66.9A95.78 95.78 0 1 0 288 160z"/></svg>
<svg class="ic" style="left:32.90px;top:1145.70px;width:30.50px;height:32.00px" viewBox="18.64 8.10 474.82 496.00" preserveAspectRatio="none"><path fill="#fff" d="M487.4 315.7l-42.6-24.6c4.3-23.2 4.3-47 0-70.2l42.6-24.6c4.9-2.8 7.1-8.6 5.5-14-11.1-35.6-30-67.8-54.7-94.6-3.8-4.1-10-5.1-14.8-2.3L380.8 110c-17.9-15.4-38.5-27.3-60.8-35.1V25.8c0-5.6-3.9-10.5-9.4-11.7-36.7-8.2-74.3-7.8-109.2 0-5.5 1.2-9.4 6.1-9.4 11.7V75c-22.2 7.9-42.8 19.8-60.8 35.1L88.7 85.5c-4.9-2.8-11-1.9-14.8 2.3-24.7 26.7-43.6 58.9-54.7 94.6-1.7 5.4.6 11.2 5.5 14L67.3 221c-4.3 23.2-4.3 47 0 70.2l-42.6 24.6c-4.9 2.8-7.1 8.6-5.5 14 11.1 35.6 30 67.8 54.7 94.6 3.8 4.1 10 5.1 14.8 2.3l42.6-24.6c17.9 15.4 38.5 27.3 60.8 35.1v49.2c0 5.6 3.9 10.5 9.4 11.7 36.7 8.2 74.3 7.8 109.2 0 5.5-1.2 9.4-6.1 9.4-11.7v-49.2c22.2-7.9 42.8-19.8 60.8-35.1l42.6 24.6c4.9 2.8 11 1.9 14.8-2.3 24.7-26.7 43.6-58.9 54.7-94.6 1.5-5.5-.7-11.3-5.6-14.1zM256 336c-44.1 0-80-35.9-80-80s35.9-80 80-80 80 35.9 80 80-35.9 80-80 80z"/></svg>
<svg class="ic" style="left:31.40px;top:1216.90px;width:32.90px;height:25.70px" viewBox="-0.00 0.00 640.00 512.00" preserveAspectRatio="none"><path fill="#fff" d="M32,224H64V416H32A31.96166,31.96166,0,0,1,0,384V256A31.96166,31.96166,0,0,1,32,224Zm512-48V448a64.06328,64.06328,0,0,1-64,64H160a64.06328,64.06328,0,0,1-64-64V176a79.974,79.974,0,0,1,80-80H288V32a32,32,0,0,1,64,0V96H464A79.974,79.974,0,0,1,544,176ZM264,256a40,40,0,1,0-40,40A39.997,39.997,0,0,0,264,256Zm-8,128H192v32h64Zm96,0H288v32h64ZM456,256a40,40,0,1,0-40,40A39.997,39.997,0,0,0,456,256Zm-8,128H384v32h64ZM640,256V384a31.96166,31.96166,0,0,1-32,32H576V224h32A31.96166,31.96166,0,0,1,640,256Z"/></svg>
<svg class="ic" style="left:31.700px;top:1361.300px;width:32.500px;height:20.600px" viewBox="60 88 252 160"><path fill="#fff" d="M60 248V118Q60 96 84 92Q135 84 180 100V248ZM192 248V100Q237 84 288 92Q312 96 312 118V248Z"/></svg>
<svg class="ic" style="left:32.00px;top:1405.50px;width:32px;height:32px;" viewBox="0 0 24 24" fill="none" stroke="#fff" stroke-width="2" stroke-linecap="round" stroke-linejoin="round"><path d="M12 3a6 6 0 0 0 9 9 9 9 0 1 1-9-9Z"/></svg>
<svg class="ic" style="left:28px;top:1494px;width:40px;height:40px" viewBox="-20 -20 40 40" fill="none" stroke="#fff" stroke-width="4.500" stroke-linecap="round" stroke-linejoin="round"><path d="M-11.700 0H11.500M2 -9.800L11.700 0L2 9.800"/></svg>
</div>
</body></html>
